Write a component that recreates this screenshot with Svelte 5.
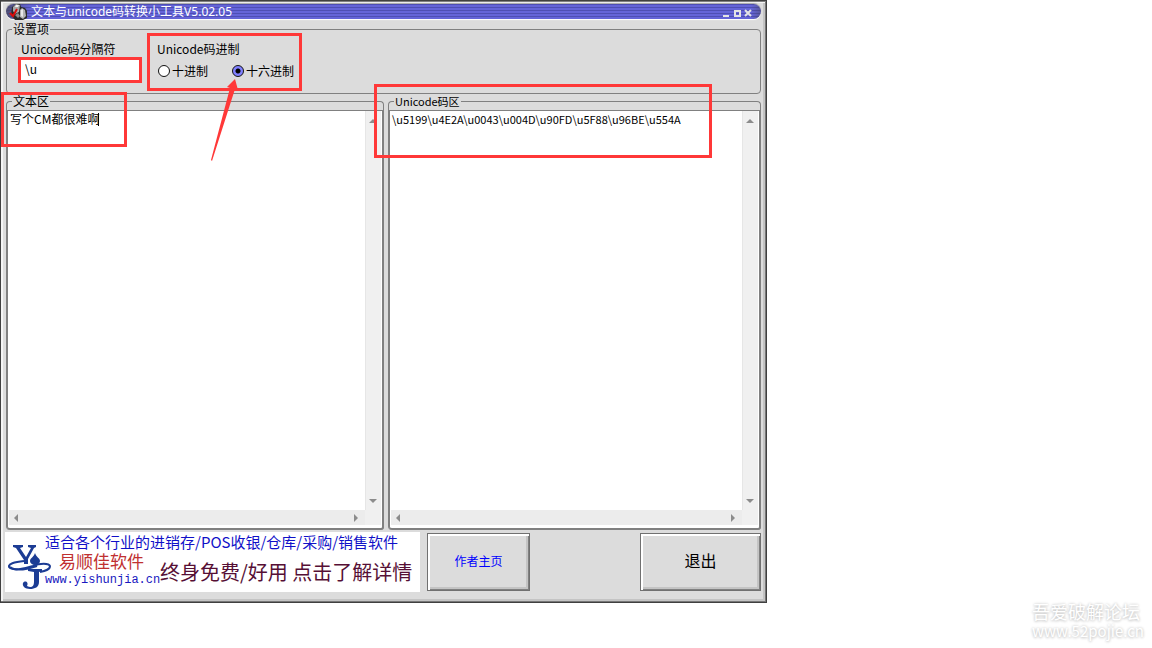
<script>
  let separator = $state('\\u');
  let radix = $state('hex');
  let source = $state('写个CM都很难啊');
  let codes = $state('\\u5199\\u4E2A\\u0043\\u004D\\u90FD\\u5F88\\u96BE\\u554A');
</script>

{#snippet bars()}
  <div class="vbar" aria-hidden="true">
    <svg width="8" height="4" viewBox="0 0 8 4"><path d="M0 4L4 0L8 4Z" /></svg>
    <svg width="8" height="4" viewBox="0 0 8 4"><path d="M0 0H8L4 4Z" /></svg>
  </div>
  <div class="hbar" aria-hidden="true">
    <svg width="4" height="8" viewBox="0 0 4 8"><path d="M4 0V8L0 4Z" /></svg>
    <svg width="4" height="8" viewBox="0 0 4 8"><path d="M0 0V8L4 4Z" /></svg>
  </div>
  <div class="corner"></div>
{/snippet}

<div class="desktop">
  <main class="window">
    <header>
      <svg class="appicon" width="18" height="17" viewBox="0 0 18 17" aria-hidden="true">
        <path d="M3 4L7 1L11 1L12 4L16 5L18 8V15L14 17H6L2 12Z" fill="#2a2a2a" />
        <path d="M4 4L7 1L11 2L10 9L6 11L4 8Z" fill="#a8a8a8" />
        <path d="M7 2L10 2L9 4L6 4Z" fill="#f2f2f2" />
        <path d="M11 7L13 5L16 7L17 13L14 16L11 14Z" fill="#b4b4b4" />
        <path d="M12 7L14 6V14L12 13Z" fill="#e8e8e8" />
        <path d="M6 12L9 10L11 13L9 15Z" fill="#8c8c8c" />
        <path d="M1 10L4 13L8 6" fill="none" stroke="#d80c0c" stroke-width="2" />
      </svg>
      <h1>文本与unicode码转换小工具V5.02.05</h1>
      <div class="controls">
        <button aria-label="最小化"><svg width="8" height="8" viewBox="0 0 8 8"><path d="M1 7H7" /></svg></button>
        <button aria-label="最大化"><svg width="8" height="8" viewBox="0 0 8 8"><path d="M2 2H7V7H2Z" /></svg></button>
        <button aria-label="关闭"><svg width="8" height="8" viewBox="0 0 8 8"><path d="M1 1L7 7M7 1L1 7" /></svg></button>
      </div>
    </header>

    <fieldset class="settings">
      <legend>设置项</legend>
      <div class="field">
        <label for="sep">Unicode码分隔符</label>
        <input id="sep" type="text" bind:value={separator} />
      </div>
      <div class="field" role="radiogroup" aria-labelledby="radix-title">
        <span id="radix-title">Unicode码进制</span>
        <div class="radios">
          <label><input type="radio" name="radix" value="dec" bind:group={radix} />十进制</label>
          <label><input type="radio" name="radix" value="hex" bind:group={radix} />十六进制</label>
        </div>
      </div>
    </fieldset>

    <div class="panes">
      <fieldset class="pane">
        <legend><label for="source">文本区</label></legend>
        <div class="editor">
          <div class="text">
            <textarea id="source" spellcheck="false" bind:value={source}></textarea>
            <i class="caret"></i>
          </div>
          {@render bars()}
        </div>
      </fieldset>
      <fieldset class="pane output">
        <legend><label for="codes">Unicode码区</label></legend>
        <div class="editor">
          <div class="text"><textarea id="codes" spellcheck="false" bind:value={codes}></textarea></div>
          {@render bars()}
        </div>
      </fieldset>
    </div>

    <footer>
      <a class="banner" href="#yishunjia">
        <svg class="logo" width="44" height="46" viewBox="0 0 44 46" aria-hidden="true">
          <g fill="#1c3c94">
            <path d="M5 1H15V3L12 4L18 13L23 4L20 3V1H28V3L26 4L20 15V20H16V16L8 4L5 3Z" />
            <path d="M27 9C28 13 32 14 32 17A5 4 0 0 1 22 17C22 14 26 13 27 9Z" />
            <path d="M20 25H34V27L31 28V38C31 43 27 45 22 45C17 45 14 42 15 39C17 36 21 38 19 42C23 44 26 43 26 38V28L20 27Z" />
          </g>
          <path d="M16 17C6 18 0 20 1 23C4 27 16 25 25 22C32 19 41 19 42 22C42 26 37 27 32 28" fill="none" stroke="#1c3c94" stroke-width="2" />
          <path d="M2 23C8 28 20 25 29 22" fill="none" stroke="#1c3c94" stroke-width="2" />
        </svg>
        <span class="line1">适合各个行业的进销存/POS收银/仓库/采购/销售软件</span>
        <span class="brand">易顺佳软件</span>
        <span class="url">www.yishunjia.cn</span>
        <span class="line2">终身免费/好用 点击了解详情</span>
      </a>
      <button class="push author">作者主页</button>
      <button class="push exit">退出</button>
    </footer>
  </main>

  <aside class="watermark">
    <span class="forum">吾爱破解论坛</span>
    <span class="site">www.52pojie.cn</span>
  </aside>

  <svg class="marks" width="720" height="170" viewBox="0 0 720 170" aria-hidden="true">
    <g fill="none" stroke="#ff3838" stroke-width="3">
      <rect x="19.5" y="58.5" width="121" height="23" />
      <rect x="148.5" y="34.5" width="152" height="55" />
      <rect x="2.5" y="93.5" width="123" height="52" />
      <rect x="375.5" y="85.5" width="335" height="71" />
    </g>
    <path d="M235 79L238 90L235 89L212 161L211 160L230 88L227 87Z" fill="#ff3838" />
  </svg>
</div>

<style>
  :global(body) {
    margin: 0;
    background: #fff;
  }
  .desktop {
    position: relative;
    display: flex;
    justify-content: space-between;
    min-height: 100vh;
    box-sizing: border-box;
    font: 12px/16px "Noto Sans CJK SC", sans-serif;
    color: #000;
  }
  .window {
    flex: 0 1 767px;
    display: flex;
    flex-direction: column;
    box-sizing: border-box;
    margin-bottom: 45px;
    padding: 3px 4px 10px 4px;
    border: 1px solid #404040;
    background: #dcdcdc;
    box-shadow: inset 0 1px #808080, inset -1px -1px #777, inset 2px 2px #f4f4f4, inset -3px -3px #c4c4c4;
  }
  header {
    display: flex;
    align-items: center;
    height: 15px;
    margin: 0 1px;
    padding: 0 9px 0 3px;
    border-radius: 8px;
    background:
      linear-gradient(90deg, #444a, transparent 24px, transparent calc(100% - 10px), #4446),
      repeating-linear-gradient(#4e4eb4 0 1px, #6464d8 1px 3px);
    box-shadow: 0 1px 1px #fff, 0 -1px 1px #aaa;
  }
  .appicon {
    flex: none;
  }
  h1 {
    flex: 1;
    margin: 0 0 0 4px;
    font: 12px/16px "Noto Sans", "Noto Sans CJK SC", sans-serif;
    color: #fff;
    white-space: nowrap;
  }
  .controls {
    display: flex;
    gap: 3px;
    padding-top: 2px;
  }
  .controls button {
    display: flex;
    padding: 0;
    border: 0;
    background: none;
  }
  .controls path {
    fill: none;
    stroke: #e4e4e4;
    stroke-width: 2;
  }
  fieldset {
    min-width: 0;
    margin: 0;
    padding: 0;
    border: 1px solid #808080;
    border-radius: 4px;
  }
  legend {
    margin-left: 5px;
    padding: 0 1px;
  }
  .settings {
    display: flex;
    margin: 2px 1px 0;
    padding: 4px 12px 8px 12px;
    gap: 16px;
  }
  .settings legend {
    margin-left: -7px;
  }
  .field {
    display: flex;
    flex-direction: column;
  }
  .field > label,
  .field > span {
    padding-left: 2px;
  }
  .field input[type="text"] {
    box-sizing: border-box;
    width: 122px;
    height: 24px;
    margin: 0;
    padding: 0 5px 2px;
    border: 1px solid #808080;
    background: #fff;
    font: inherit;
  }
  .field + .field {
    margin-left: -2px;
  }
  .radios {
    display: flex;
    gap: 24px;
    padding: 6px 3px;
  }
  .radios label {
    display: flex;
    align-items: center;
    gap: 2px;
    white-space: nowrap;
  }
  .radios input {
    appearance: none;
    box-sizing: border-box;
    width: 12px;
    height: 12px;
    margin: 0;
    border: 1px solid #111;
    border-radius: 50%;
    background: #fff;
  }
  .radios input:checked {
    background: radial-gradient(circle, #000 0 2px, #8080ff 3px);
  }
  .panes {
    flex: 1;
    display: grid;
    grid-template-columns: 378fr 373fr;
    gap: 4px;
    margin: 0 1px;
  }
  .pane {
    display: flex;
    flex-direction: column;
    padding-top: 2px;
    border-bottom: 0;
  }
  .pane legend {
    line-height: 14px;
  }
  .output legend,
  .output textarea {
    font-size: 11px;
  }
  .editor {
    box-sizing: border-box;
    height: 100%;
    display: grid;
    grid-template-columns: 1fr 16px;
    grid-template-rows: 1fr 15px;
    margin-right: -1px;
    padding: 0 1px 3px 1px;
    border: 2px solid #808080;
    border-width: 1px 2px 2px 1px;
    border-radius: 0 0 3px 3px;
    background: #fff;
  }
  .text {
    position: relative;
    display: flex;
    min-height: 160px;
  }
  textarea {
    flex: 1;
    min-width: 0;
    margin: 0;
    padding: 0 1px;
    border: 0;
    outline: 0;
    resize: none;
    overflow: hidden;
    background: none;
    font: inherit;
  }
  .caret {
    position: absolute;
    left: 89px;
    top: 2px;
    width: 1px;
    height: 13px;
    background: #000;
  }
  .vbar,
  .hbar,
  .corner {
    background: #f0f0f0;
  }
  .vbar {
    display: flex;
    flex-direction: column;
    align-items: center;
    justify-content: space-between;
    padding: 8px 0 7px;
    box-shadow: inset 1px 0 #e6e6e6;
  }
  .hbar {
    display: flex;
    align-items: center;
    justify-content: space-between;
    padding: 0 7px 0 5px;
    background: #ececec;
  }
  .vbar path,
  .hbar path {
    fill: #8c8c8c;
  }
  footer {
    display: flex;
    align-items: center;
    margin: 2px 1px 0 0;
  }
  .banner {
    flex: none;
    box-sizing: border-box;
    display: grid;
    grid-template-columns: 40px 113px 1fr;
    grid-template-rows: 20px 20px 18px;
    width: 415px;
    height: 60px;
    background: #fff;
    text-decoration: none;
    white-space: nowrap;
  }
  .logo {
    grid-area: 1 / 1 / 4 / 2;
    margin: 12px 0 0 3px;
  }
  .line1 {
    grid-area: 1 / 2 / 2 / 4;
    font-size: 15px;
    line-height: 20px;
    color: #1010c8;
  }
  .brand {
    grid-area: 2 / 2 / 3 / 3;
    padding-left: 14px;
    font-size: 17px;
    line-height: 18px;
    color: #c03030;
  }
  .url {
    grid-area: 3 / 2 / 4 / 3;
    font: 12px/16px "Liberation Mono", monospace;
    color: #1818c0;
  }
  .line2 {
    grid-area: 2 / 3 / 4 / 4;
    padding-left: 2px;
    font-size: 20px;
    line-height: 40px;
    color: #560f35;
  }
  .push {
    box-sizing: border-box;
    height: 58px;
    padding: 0 0 2px;
    border: 1px solid #707070;
    background: #dcdcdc;
    box-shadow: inset 2px 2px #fff, inset -1px -1px #808080, inset -3px -3px #c4c4c4;
    font: inherit;
  }
  .author {
    width: 103px;
    margin-left: 7px;
    color: #00f;
  }
  .exit {
    width: 121px;
    margin-left: auto;
    padding-bottom: 4px;
    font-size: 16px;
  }
  .watermark {
    display: flex;
    flex-direction: column;
    align-self: flex-end;
    padding: 0 8px 7px;
    color: #fff;
    text-shadow: 0 0 3px #c4c4c4, 0 1px 3px #d0d0d0;
    white-space: nowrap;
  }
  .forum {
    font-size: 18px;
    line-height: 20px;
  }
  .site {
    font-size: 15px;
    line-height: 20px;
  }
  .marks {
    position: absolute;
    left: 0;
    top: 0;
    pointer-events: none;
  }
</style>
